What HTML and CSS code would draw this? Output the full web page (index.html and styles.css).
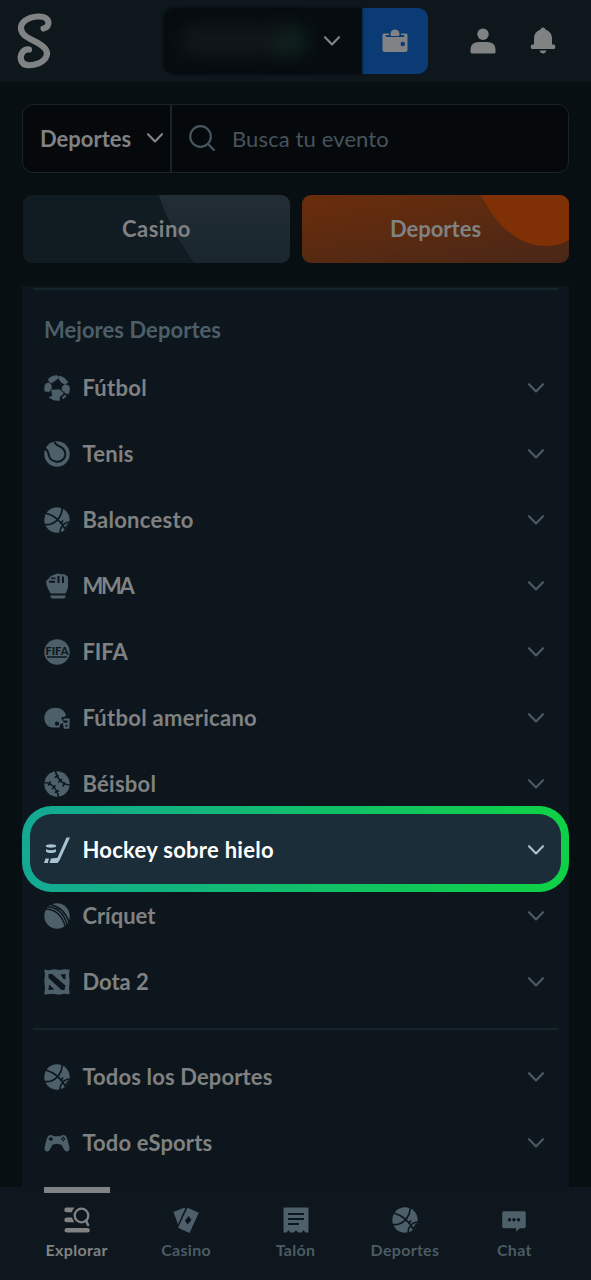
FILE: index.html
```html
<!DOCTYPE html>
<html lang="es">
<head>
<meta charset="utf-8">
<title>Deportes</title>
<link rel="stylesheet" href="styles.css">
</head>
<body>
<svg class="defs" aria-hidden="true">
  <symbol id="chev" viewBox="0 0 18 12"><path d="M2 2.2 9 9.4 16 2.2" fill="none" stroke="currentColor" stroke-width="2.1" stroke-linecap="round" stroke-linejoin="round"/></symbol>
  <symbol id="ball" viewBox="0 0 26 26"><circle cx="13" cy="13" r="12.7" fill="currentColor"/><g class="cut-line ball-line"><path d="M1.500 6C9 8 17 14 21.500 22.500M0 17.500C9 19 18 12 18.300 0M16 26C15.800 20 20 15 26 15M19 13.500 16.500 17M20.500 22.500 25 16.500"/></g></symbol>
  <symbol id="soccer" viewBox="0 0 26 26"><g fill="currentColor" stroke="currentColor" stroke-width=".6" stroke-linejoin="round"><path d="M4.500 3.800Q8 .5 13 .5L14.800 2.500 12 5 7.500 8 5 6.500Z"/><path d="M15 1Q21 2 24 7.500L20.500 9.200 17.500 7.500 14.800 4Z"/><path d="M1.500 9 4.500 7.800 7 9.500 7.500 13.500 5 16.800 .8 16.200Q0 12 1.500 9Z"/><path d="M18.500 11.500 21 9.500 25 11Q26.300 15 24.500 18.800L22 18.500 17.800 14.800Z"/><path d="M7.500 15 15.500 14.700 19.500 18 17.500 20.500 15.500 21.500 15.500 25.300Q9.500 26.200 5 22.300L8.500 21.200Z"/><path d="M18.500 22 21.500 20 22 21.500 19 24Z"/></g></symbol>
  <symbol id="tennis" viewBox="0 0 26 26"><circle cx="13" cy="13" r="12.700" fill="currentColor"/><path class="cut-line" d="M1 7.500C4 9 4.500 12 5 15 7 21 15.500 22.500 19.500 18 23.500 13 20.500 7.500 16 5.500 13 4.500 11.500 3.500 10.500 1"/></symbol>
  <symbol id="fist" viewBox="0 0 26 26"><path fill="currentColor" d="M2.300 7.500Q4.500 6.500 5.500 4.500 6.500 2.300 10 2L11.500 1Q14 0 16.500 1.300H20L22 2.300Q24 2.500 24 5V14Q23.500 17 21.500 20.500H6.500Q3 14 2.300 11ZM6.500 22.500H21.500V23.500Q21.500 25.500 19.500 25.500H8.500Q6.500 25.500 6.500 23.500Z"/><path class="cut-line" d="M14.500 3V10M19 3.500V10M5 8.800H11"/><path class="cut-line thin" d="M7 5.300H11.500"/></symbol>
  <symbol id="helmet" viewBox="0 0 26 26"><path fill="currentColor" d="M.3 13C.5 6.500 5 2.700 11.500 2.700 17 2.700 21.500 6 22 11L17.500 12.500V14L20 17.500 16 19.500 15.500 22.500H8L4.500 21.500Q.3 18 .3 13Z"/><circle class="cut" cx="13" cy="18.700" r="2.100"/><path d="M19.500 14.500H24.700L24.300 22.800H20.700L20 18.800H24" fill="none" stroke="currentColor" stroke-width="2.100" stroke-linejoin="round"/></symbol>
  <symbol id="baseball" viewBox="0 0 26 26"><circle cx="13" cy="13" r="12.700" fill="currentColor"/><path class="cut-line stitch" d="M11.500 0C12.500 7 18 13.500 26 14M0 11.500C8 12 13 18 14.500 26M10.800 6.500 14.800 4.500M14.300 11.500 18 8M18.800 15.500 21 11.500M4.300 14.500 6.500 10.500M8 18 11.500 14.300M10.800 21.500 15 19.500"/></symbol>
  <symbol id="hockey" viewBox="0 0 26 26"><path fill="currentColor" d="M22.500.5H26L15.500 23.500 13.500 26H5.500L7 21.500 13.500 20.800ZM1.500 21.500H5L3.800 26H0Z"/><ellipse cx="7" cy="9" rx="5.200" ry="1.700" fill="currentColor"/><path fill="currentColor" d="M2 12.200C5 13.500 9 13.500 12 12.200V14.800C10 16.500 4 16.500 2 14.800Z"/></symbol>
  <symbol id="cricket" viewBox="0 0 26 26"><circle cx="13" cy="13" r="12.700" fill="currentColor"/><path class="cut-line thin" d="M1 6C11 6 18 12 21.500 24M4 3.800C13 4.500 20 11 23 21.500M6.500 1.500C15.500 3.500 21.500 9 25 19"/></symbol>
  <symbol id="dota" viewBox="0 0 26 26"><path fill="currentColor" d="M.3.500 5 1.200 10 .3 16 1 21 .3 25.700.8 25 6 25.700 12 25 19 25.700 25.300 20 24.800 15 25.700 9 24.800.3 25.500 1 19 .3 12 1 6Z"/><path class="cut" d="M4.500 5H8L21.500 16.500 20.500 21H17.500L4.500 9ZM16.500 5.500 21.500 5V10.500L19 9.500ZM5 15.500 10.500 20.500 4.500 21Z"/></symbol>
  <symbol id="pad" viewBox="0 0 26 26"><path fill="currentColor" d="M4.500 5.500 8 5 9.500 6.300H16.500L18 5 21.500 5.500 23 8 25.500 17.500C26 22 21.500 22.500 20 19.500L17.500 14.800 13 13.800 8.500 14.800 6 19.500C4.500 22.500 0 22 .5 17.500L3 8Z"/><path class="cut-line thin" d="M4.700 9H9M6.900 7V11"/><path class="cut" d="M19.200 6.500 21.500 9 19.200 11.500 16.900 9Z"/><circle cx="19.200" cy="9" r=".8" fill="currentColor"/></symbol>
</svg>

<header class="top">
  <svg class="logo" viewBox="0 0 60 82"><path d="M43.500 28.500C51 27 50.500 16 38.500 16.500 27 17 20.500 22.500 21 28.500 21.500 36 30 38.500 38 43 45 47 48.300 51 46.500 56 44 63 34 65.500 28 65.200 20.500 64.800 19.500 57.500 22 53 23.500 50.500 26 49.300 29 49.500"/></svg>
  <div class="wallet">
    <div class="balance"><i class="blob"></i><i class="blob green"></i><svg class="chev light"><use href="#chev"/></svg></div>
    <div class="pay"><svg viewBox="0 0 26 26"><path fill="currentColor" d="M2 5.500H7V7H3.800V9H22.200V7H19V5.500H24Q25.500 5.500 25.500 7V22Q25.500 24 23.500 24H2.500Q.5 24 .5 22V7Q.5 5.500 2 5.500Z"/><path fill="currentColor" d="M9 8A4.500 4.500 0 1 1 17 8Z"/><circle class="hole" cx="20.800" cy="16" r="2.300"/></svg></div>
  </div>
  <svg class="user" viewBox="0 0 26 26"><circle cx="13" cy="6.200" r="5.700"/><path d="M.5 24V21Q1 14 9 14H17Q25 14 25.500 21V24Q25.500 25.500 24 25.500H2Q.5 25.500 .5 24Z"/></svg>
  <svg class="bell" viewBox="0 0 26 28"><path d="M13 .5Q15 .5 15.500 2.500Q22 5 22 11V17.500H24.500Q26 19.500 24.500 22H1.500Q0 19.500 1.500 17.500H4V11Q4 5 10.500 2.500Q11 .5 13 .5ZM9.500 23.500H16.500Q15.500 26.500 13 26.500T9.500 23.500Z"/></svg>
</header>

<div class="search">
  <div class="kind"><span>Deportes</span><svg class="chev light"><use href="#chev"/></svg></div>
  <div class="query"><svg class="lens" viewBox="0 0 26 26"><circle cx="11.500" cy="11.500" r="10.300"/><path d="M19 19 25 25"/></svg><span>Busca tu evento</span></div>
</div>

<div class="tabs">
  <div class="tab casino"><svg viewBox="0 0 267 68" preserveAspectRatio="none"><defs><linearGradient id="g" x2="0" y2="1"><stop stop-color="#222d36"/><stop offset="1" stop-color="#19262e"/></linearGradient></defs><path d="M136 0Q146 32 171 68H267V0Z" fill="url(#g)"/></svg><span>Casino</span></div>
  <div class="tab sports"><svg viewBox="0 0 267 68"><path d="M179 0C193 29 216 51 243 51Q258 51 267 45V0Z" fill="#7f3004"/></svg><span>Deportes</span></div>
</div>

<main class="panel">
  <h2>Mejores Deportes</h2>
  <div class="list">
    <div class="row"><svg class="ic"><use href="#soccer"/></svg><span>Fútbol</span><svg class="chev"><use href="#chev"/></svg></div>
    <div class="row"><svg class="ic"><use href="#tennis"/></svg><span>Tenis</span><svg class="chev"><use href="#chev"/></svg></div>
    <div class="row"><svg class="ic"><use href="#ball"/></svg><span>Baloncesto</span><svg class="chev"><use href="#chev"/></svg></div>
    <div class="row caps"><svg class="ic"><use href="#fist"/></svg><span>MMA</span><svg class="chev"><use href="#chev"/></svg></div>
    <div class="row short"><svg class="ic" viewBox="0 0 26 26"><circle cx="13" cy="13" r="12.700" fill="currentColor"/><text class="cut fifa-word" x="13" y="15.800" text-anchor="middle" textLength="23" lengthAdjust="spacingAndGlyphs">FIFA</text><path class="cut-line thin" d="M3 18H23"/></svg><span>FIFA</span><svg class="chev"><use href="#chev"/></svg></div>
    <div class="row"><svg class="ic"><use href="#helmet"/></svg><span>Fútbol americano</span><svg class="chev"><use href="#chev"/></svg></div>
    <div class="row"><svg class="ic"><use href="#baseball"/></svg><span>Béisbol</span><svg class="chev"><use href="#chev"/></svg></div>
    <div class="row active"><svg class="ic"><use href="#hockey"/></svg><span>Hockey sobre hielo</span><svg class="chev"><use href="#chev"/></svg></div>
    <div class="row short"><svg class="ic"><use href="#cricket"/></svg><span>Críquet</span><svg class="chev"><use href="#chev"/></svg></div>
    <div class="row short"><svg class="ic"><use href="#dota"/></svg><span>Dota 2</span><svg class="chev"><use href="#chev"/></svg></div>
  </div>
  <div class="list all">
    <div class="row"><svg class="ic"><use href="#ball"/></svg><span>Todos los Deportes</span><svg class="chev"><use href="#chev"/></svg></div>
    <div class="row"><svg class="ic"><use href="#pad"/></svg><span>Todo eSports</span><svg class="chev"><use href="#chev"/></svg></div>
  </div>
</main>

<nav class="bottom">
  <div class="item on"><svg class="ic" viewBox="0 0 26 26"><g fill="none" stroke="currentColor" stroke-linecap="round"><path stroke-width="4.600" d="M2.800 23.300H23.500"/><circle cx="17.500" cy="8.500" r="6.800" stroke-width="2.300"/><path stroke-width="2.600" d="M22 13.500 24 18"/></g><path fill="currentColor" d="M2.500.5H10.500Q8.500 2.500 8 5.300H2.500Q.3 5.300.3 2.900T2.500.5ZM2.500 10.500H8Q8.800 13.500 10.500 15.200H2.500Q.3 15.200.3 12.900T2.500 10.500Z"/></svg><span>Explorar</span></div>
  <div class="item"><svg class="ic" viewBox="0 0 26 26"><path fill="currentColor" d="M.5 5 11 .8 12.300 1.300 5 17.500ZM14.500.8 25.800 5.800 16.500 26 5 20.800Z"/><path class="cut" d="M15.700 9 18.500 13 14.500 17.500 12 13.500Z"/></svg><span>Casino</span></div>
  <div class="item"><svg class="ic" viewBox="0 0 26 26"><path fill="currentColor" d="M.5.500H25.500V25.500H22.500L20.500 23.300 18.500 25.500H15L13 23.300 11 25.500H7.500L5.500 23.300 3.500 25.500H.5Z"/><path class="cut-line" d="M5 7H21M5 12H21M5 17H16"/></svg><span>Talón</span></div>
  <div class="item"><svg class="ic"><use href="#ball"/></svg><span>Deportes</span></div>
  <div class="item"><svg class="ic" viewBox="0 0 26 26"><path fill="currentColor" d="M2.800 4.300H23.200Q24.800 4.300 24.800 6V19.500Q24.800 21.300 23 21.300H18.800L15.200 24.800V21.300H3Q1.200 21.300 1.200 19.500V6Q1.200 4.300 2.800 4.300Z"/><g class="cut"><circle cx="8.500" cy="12.800" r="1.700"/><circle cx="13" cy="12.800" r="1.700"/><circle cx="17.500" cy="12.800" r="1.700"/></g></svg><span>Chat</span></div>
</nav>
</body>
</html>
```
FILE: styles.css
```css
* { box-sizing: border-box; }
body { margin: 0; width: 591px; height: 1280px; overflow: hidden; display: flex; flex-direction: column; background: #080f12; color: #808182; font-family: Lato, "Open Sans", sans-serif; font-size: 22px; font-weight: 700; }
svg { display: block; flex: none; }
.defs { width: 0; height: 0; position: absolute; }
.cut { fill: #0d161c; }
.cut-line { fill: none; stroke: #0d161c; stroke-width: 2; }
.ball-line { stroke-width: 1.7; }
.stitch { stroke-width: 1.6; }
.cut-line.thin { stroke-width: 1.5; }
.fifa-word { font: 900 10.5px Lato, sans-serif; letter-spacing: 0; }
.chev { width: 18px; height: 12px; color: #4c5a63; }
.chev.light { color: #858687; }
.ic { width: 26px; height: 26px; color: #4d5f69; }

.top { height: 82px; flex: none; display: flex; align-items: center; background: #0d171c; }
.logo { width: 60px; height: 82px; fill: none; stroke: #818283; stroke-width: 6.2; stroke-linecap: round; }
.wallet { display: flex; width: 264px; height: 66px; margin-left: 103.5px; border-radius: 10px; }
.balance { position: relative; flex: 1; display: flex; align-items: center; justify-content: flex-end; padding-right: 21px; background: #070c11; border-radius: 10px 0 0 10px; box-shadow: 0 0 3px #070c11; }
.blob { position: absolute; left: 16px; top: 18px; width: 110px; height: 30px; border-radius: 15px; background: #12171a; filter: blur(9px); }
.blob.green { left: 110px; width: 34px; background: #0f221d; }
.pay { width: 66px; display: flex; align-items: center; justify-content: center; background: #0b3b74; border-radius: 0 10px 10px 0; color: #808284; }
.pay svg { width: 26px; height: 26px; }
.hole { fill: #0b3b74; }
.user, .bell { fill: #818283; width: 26px; height: 26px; }
.user { margin-left: 42px; }
.bell { height: 28px; margin-left: 34.5px; }

.search { display: flex; height: 69px; margin: 22px 22px 0; border: 1.5px solid #18232a; border-radius: 11px; background: #05090c; flex: none; }
.kind { width: 149px; display: flex; align-items: center; justify-content: space-between; padding: 0 6px 1px 17px; border-right: 2px solid #18232a; }
.query { display: flex; align-items: center; gap: 17px; padding-left: 17px; color: #46545d; font-weight: 400; letter-spacing: .12px; padding-bottom: 1px; }
.lens { width: 26px; height: 26px; fill: none; stroke: #465660; stroke-width: 2.2; stroke-linecap: round; }

.tabs { display: grid; grid-template-columns: 1fr 1fr; gap: 12px; margin: 22px 22px 0 23px; height: 68px; flex: none; }
.tab { display: grid; place-items: center; border-radius: 9px; overflow: hidden; }
.tab > * { grid-area: 1 / 1; }
.tab svg { width: 100%; height: 100%; }
.tab span { padding-bottom: 2px; }
.casino { background: #101b22; }
.casino span { letter-spacing: .5px; }
.sports { background: linear-gradient(170deg, #6b2d0b, #482717); }

.panel { flex: none; height: 901px; margin: 23px 22px 0; background: #0d161c; display: flex; flex-direction: column; }
.panel h2 { margin: 2px 11px 0; border-top: 2px solid #16252c; padding-left: 11px; height: 66px; line-height: 79px; font-size: 22px; letter-spacing: .05px; color: #4c5f69; }
.list.all { border-top: 2px solid #16252c; margin: 14px 11px 0; padding-top: 13px; }
.all .row { margin: 0 -11px; letter-spacing: .14px; }
.row { position: relative; height: 66px; display: flex; align-items: center; padding: 1px 24px 0 22.4px; letter-spacing: .28px; }
.row span { padding-bottom: 1px; }
.row .ic { margin-right: 12px; }
.row .chev { margin-left: auto; position: relative; top: .5px; }
.row.caps { letter-spacing: -2.2px; }
.row.short { letter-spacing: 0; }
.active { z-index: 1; height: 86px; margin: -10px 0; border-radius: 30px; border: 8px solid transparent; padding: 1px 16px 0 14.4px; background: linear-gradient(#1b2d38, #1b2d38) padding-box, linear-gradient(100deg, #14a895, #0fd147 95%) border-box; color: #fff; }
.active .ic { color: #a6c2d3; }
.active .chev { color: #a9c2d0; }

.bottom { height: 93px; flex: none; display: flex; background: #0e171d; padding: 0 22px; color: #4b5b64; font-size: 16px; letter-spacing: .3px; }
.item { flex: 1; display: flex; flex-direction: column; align-items: center; padding-top: 20px; gap: 7px; line-height: 20px; position: relative; }
.on { color: #818283; }
.on .ic { color: #818283; }
.on::before { content: ""; position: absolute; top: 0; left: 22px; width: 66px; height: 5.5px; background: #818283; }
```
